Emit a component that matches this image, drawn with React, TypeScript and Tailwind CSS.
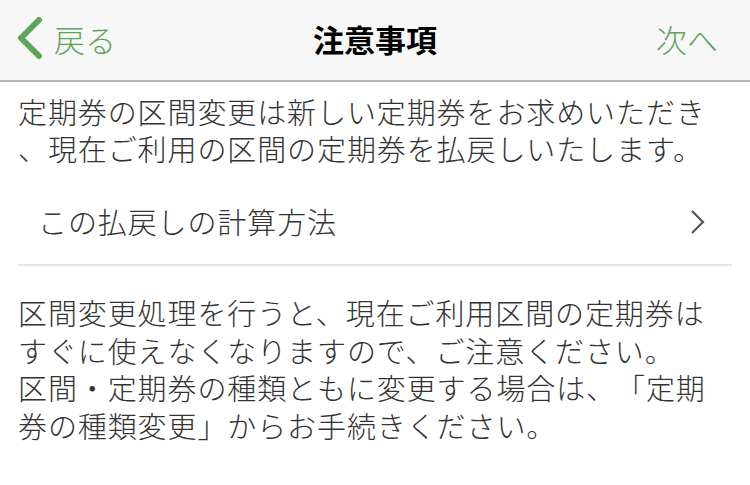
import React from "react";

const font = { fontFamily: '"Noto Sans CJK JP", "Noto Sans", sans-serif' };

export default function App() {
  return (
    <div className="w-[750px] h-[485px] bg-white overflow-hidden [text-spacing-trim:space-all]" style={font}>
      <header className="h-[82px] bg-[#f7f7f7] border-b-2 border-[#b4b4b4] flex items-center justify-between px-[15px] relative">
        <div className="flex items-center gap-[11px] text-[#5ca65a]">
          <svg width="28" height="42" viewBox="0 0 28 42" className="mb-[4px]">
            <path d="M24 3 L6 21 L24 39" fill="none" stroke="#5ca65a" strokeWidth="6" strokeLinecap="round" strokeLinejoin="round" />
          </svg>
          <span className="text-[31px] font-light leading-none mb-[4px]">戻る</span>
        </div>
        <div className="absolute left-0 right-0 top-0 h-[80px] flex items-center justify-center pointer-events-none">
          <span className="text-[31px] font-bold text-black leading-none mb-[4px]">注意事項</span>
        </div>
        <span className="text-[31px] font-light text-[#5ca65a] leading-none mr-[17px] mb-[4px]">次へ</span>
      </header>
      <main className="px-[18px] text-[#333] text-[29px] font-light tracking-[0.9px]">
        <p className="leading-[37px] pt-[11px]">
          定期券の区間変更は新しい定期券をお求めいただき<br />、現在ご利用の区間の定期券を払戻しいたします。
        </p>
        <div className="flex items-center justify-between h-[99px] pl-[20px] pr-[26px] pt-[12px] border-b-2 border-[#e6e6e6]">
          <span className="leading-none">この払戻しの計算方法</span>
          <svg width="16" height="26" viewBox="0 0 16 26">
            <path d="M2 2 L13 13 L2 24" fill="none" stroke="#555" strokeWidth="2.2" />
          </svg>
        </div>
        <p className="leading-[37.5px] pt-[28px]">
          区間変更処理を行うと、現在ご利用区間の定期券は<br />すぐに使えなくなりますので、ご注意ください。<br />区間・定期券の種類ともに変更する場合は、「定期<br />券の種類変更」からお手続きください。
        </p>
      </main>
    </div>
  );
}
